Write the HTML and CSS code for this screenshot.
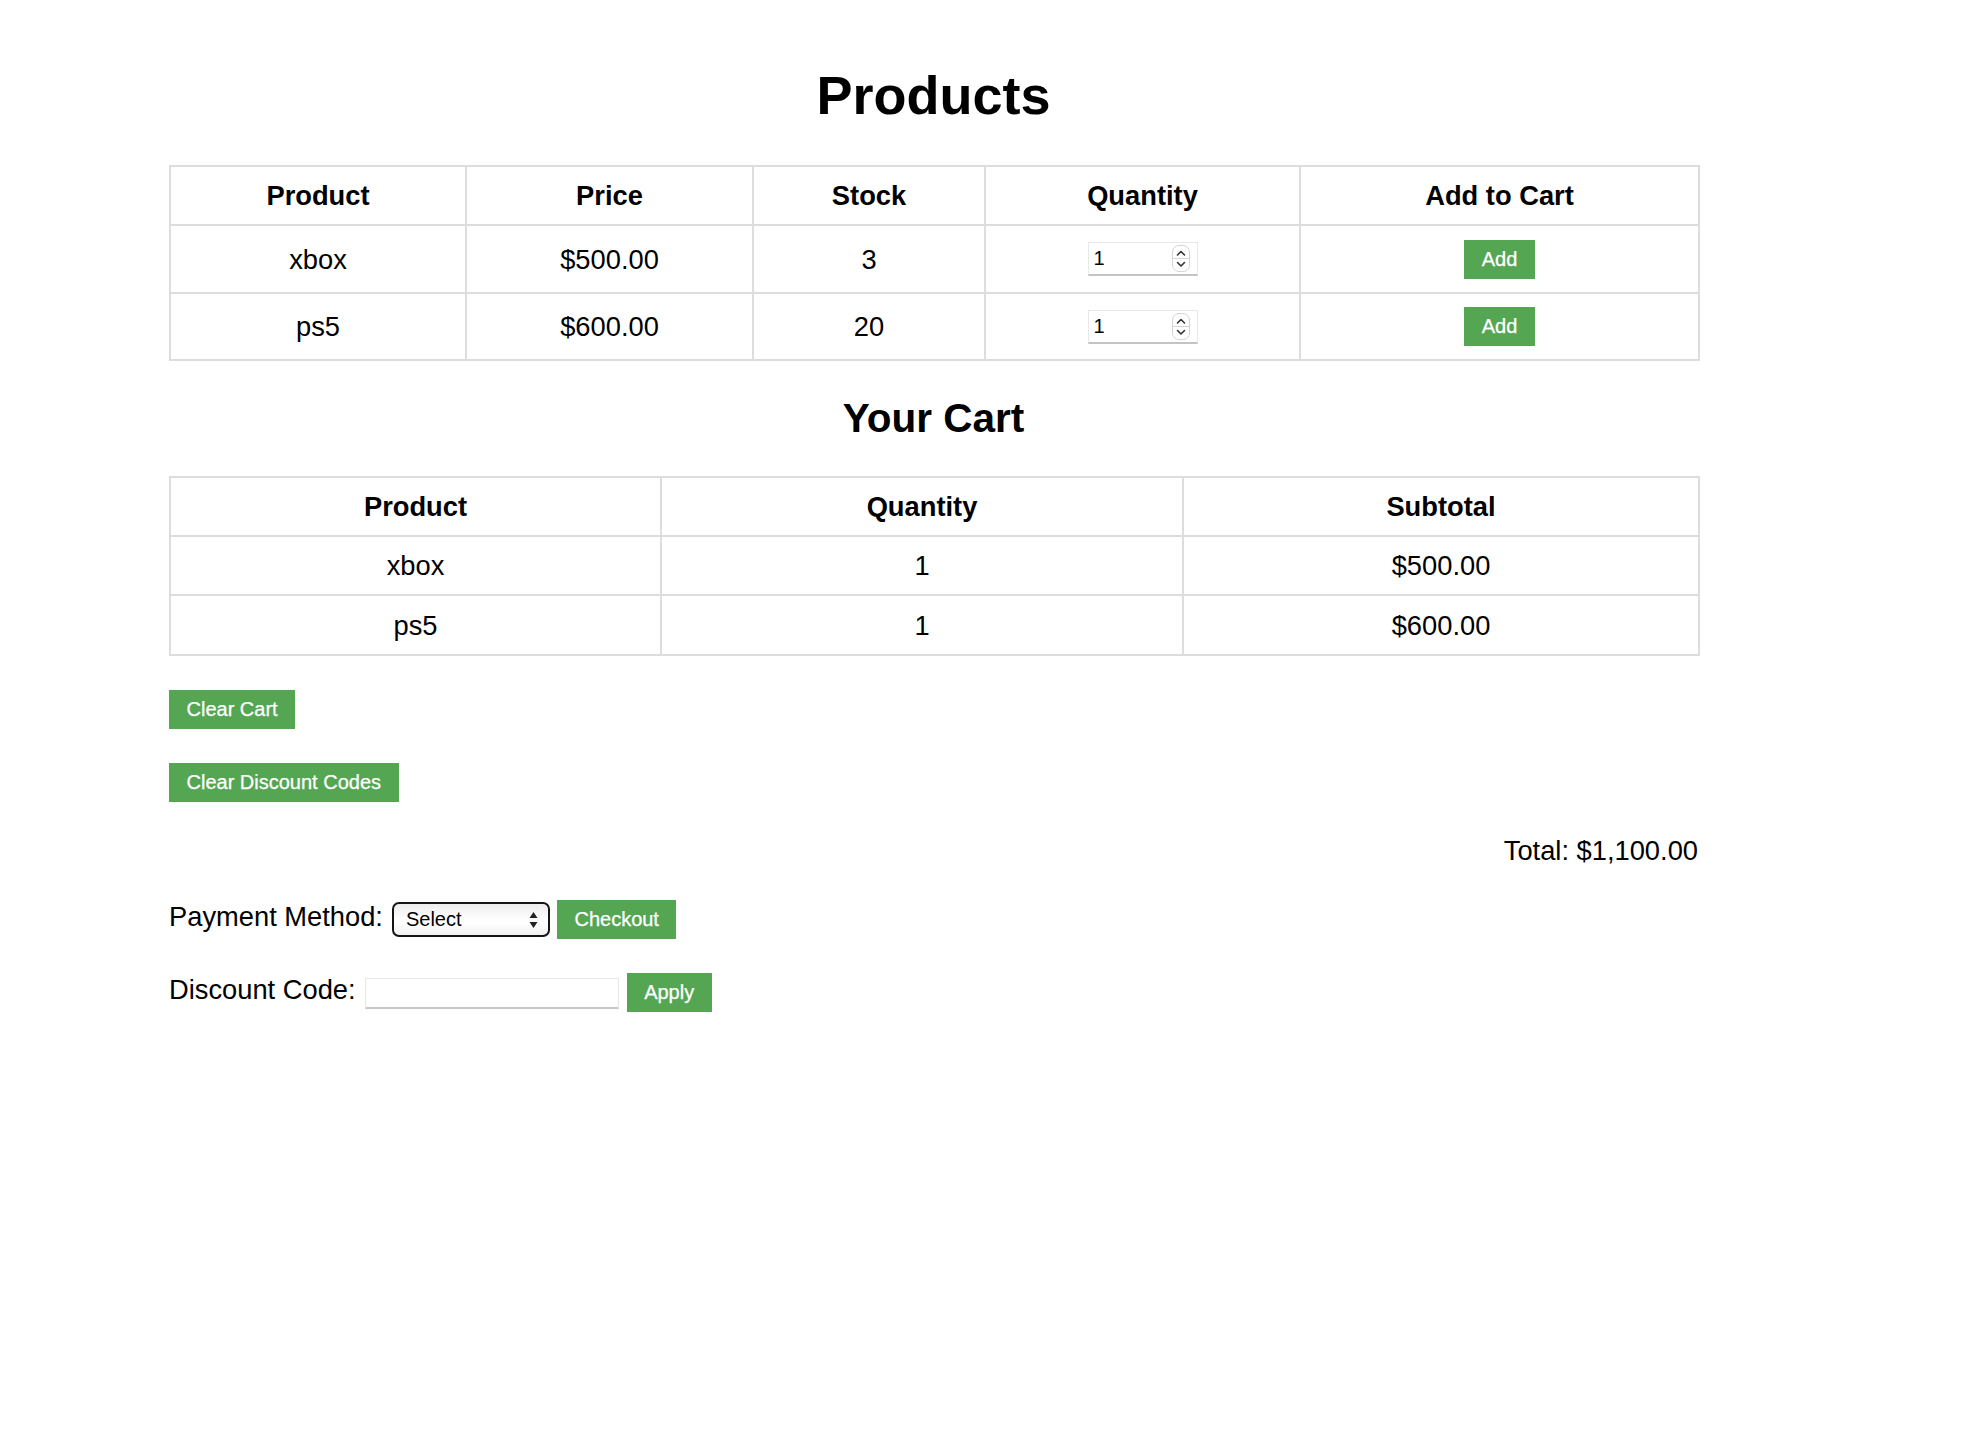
FILE: index.html
```html
<!DOCTYPE html>
<html lang="en">
<head>
<meta charset="utf-8">
<title>Products</title>
<link rel="stylesheet" href="styles.css">
</head>
<body>
<div class="page">
  <h1 class="title">Products</h1>
  <table class="grid products">
    <colgroup>
      <col class="pc1"><col class="pc2"><col class="pc3"><col class="pc4"><col class="pc5">
    </colgroup>
    <thead>
      <tr><th>Product</th><th>Price</th><th>Stock</th><th>Quantity</th><th>Add to Cart</th></tr>
    </thead>
    <tbody>
      <tr>
        <td>xbox</td><td>$500.00</td><td>3</td>
        <td><span class="qty"><input class="qty-input" type="number" value="1"><span class="spin"><svg width="18" height="27" viewBox="0 0 18 27"><path d="M5.5 10 L9 6.5 L12.5 10" fill="none" stroke="#333" stroke-width="1.6" stroke-linecap="round" stroke-linejoin="round"/><line x1="1" y1="13.5" x2="17" y2="13.5" stroke="#d6d6d6" stroke-width="1"/><path d="M5.5 17.5 L9 21 L12.5 17.5" fill="none" stroke="#333" stroke-width="1.6" stroke-linecap="round" stroke-linejoin="round"/></svg></span></span></td>
        <td><button class="btn">Add</button></td>
      </tr>
      <tr>
        <td>ps5</td><td>$600.00</td><td>20</td>
        <td><span class="qty"><input class="qty-input" type="number" value="1"><span class="spin"><svg width="18" height="27" viewBox="0 0 18 27"><path d="M5.5 10 L9 6.5 L12.5 10" fill="none" stroke="#333" stroke-width="1.6" stroke-linecap="round" stroke-linejoin="round"/><line x1="1" y1="13.5" x2="17" y2="13.5" stroke="#d6d6d6" stroke-width="1"/><path d="M5.5 17.5 L9 21 L12.5 17.5" fill="none" stroke="#333" stroke-width="1.6" stroke-linecap="round" stroke-linejoin="round"/></svg></span></span></td>
        <td><button class="btn">Add</button></td>
      </tr>
    </tbody>
  </table>

  <h2 class="subtitle">Your Cart</h2>
  <table class="grid cart">
    <colgroup><col class="cc1"><col class="cc2"><col class="cc3"></colgroup>
    <thead>
      <tr><th>Product</th><th>Quantity</th><th>Subtotal</th></tr>
    </thead>
    <tbody>
      <tr><td>xbox</td><td>1</td><td>$500.00</td></tr>
      <tr><td>ps5</td><td>1</td><td>$600.00</td></tr>
    </tbody>
  </table>

  <div class="block first"><button class="btn">Clear Cart</button></div>
  <div class="block second"><button class="btn">Clear Discount Codes</button></div>

  <div class="total">Total: $1,100.00</div>

  <div class="form-row pay-row">
    <label class="label">Payment Method:</label>
    <span class="select-wrap">
      <select class="select"><option>Select</option><option>Credit Card</option><option>PayPal</option></select>
      <svg class="select-arrows" width="9" height="18" viewBox="0 0 9 18"><path d="M4.5 1 L8.5 7 L0.5 7 Z" fill="#222"/><path d="M4.5 17 L8.5 11 L0.5 11 Z" fill="#222"/></svg>
    </span>
    <button class="btn">Checkout</button>
  </div>

  <div class="form-row code-row">
    <label class="label">Discount Code:</label>
    <input class="code-input" type="text">
    <button class="btn">Apply</button>
  </div>
</div>
</body>
</html>
```
FILE: styles.css
```css
html, body {
  margin: 0;
  padding: 0;
  background: #ffffff;
}

body {
  font-family: "Liberation Sans", Arial, Helvetica, sans-serif;
  color: #000;
}

.page {
  margin-left: 169px;
  width: 1529px;
}

.title {
  font-size: 54px;
  font-weight: bold;
  line-height: 61px;
  text-align: center;
  margin: 64.5px 0 39.5px;
}

.subtitle {
  font-size: 40.5px;
  font-weight: bold;
  line-height: 46px;
  text-align: center;
  margin: 33.5px 0 35px;
}

.grid {
  width: 1529px;
  border-collapse: collapse;
  table-layout: fixed;
  font-size: 27.3px;
  line-height: 31px;
}

.grid th,
.grid td {
  border: 2px solid #dddddd;
  padding: 13.2px;
  text-align: center;
  vertical-align: middle;
}

.grid th {
  font-weight: bold;
}

.pc1 { width: 296px; }
.pc2 { width: 287px; }
.pc3 { width: 232px; }
.pc4 { width: 315px; }
.pc5 { width: 399px; }

.cc1 { width: 491px; }
.cc2 { width: 522px; }
.cc3 { width: 516px; }

.btn {
  font-family: "Liberation Sans", Arial, Helvetica, sans-serif;
  font-size: 20px;
  line-height: 23px;
  height: 39px;
  padding: 8px 17.5px;
  border: none;
  border-radius: 0;
  background: #54a653;
  color: #ffffff;
  cursor: pointer;
  -webkit-text-stroke: 0.25px #ffffff;
}

.grid .btn {
  vertical-align: middle;
}

.qty {
  position: relative;
  display: inline-block;
  vertical-align: middle;
}

.qty-input {
  box-sizing: border-box;
  width: 110px;
  height: 34px;
  padding: 0 0 0 5px;
  font-family: "Liberation Sans", Arial, Helvetica, sans-serif;
  font-size: 20px;
  border: 1px solid #e8e8e8;
  border-bottom: 2px solid #c4c4c4;
  border-radius: 0;
  background: #fff;
  color: #000;
  -moz-appearance: textfield;
  appearance: textfield;
  display: block;
  outline: none;
}

.qty-input::-webkit-inner-spin-button,
.qty-input::-webkit-outer-spin-button {
  -webkit-appearance: none;
  margin: 0;
}

.spin {
  position: absolute;
  right: 8px;
  top: 3px;
  width: 18px;
  height: 27px;
  box-sizing: border-box;
  border: 1px solid #d4d4d4;
  border-radius: 7px;
  background: #fff;
  overflow: hidden;
}

.spin svg {
  display: block;
  margin: -1px 0 0 -1px;
}

.block.first {
  margin-top: 34.5px;
}

.block.second {
  margin-top: 34px;
}

.block .btn {
  display: block;
}

.total {
  margin-top: 33px;
  text-align: right;
  font-size: 27.3px;
  line-height: 31px;
}

.form-row {
  display: flex;
  align-items: baseline;
}

.pay-row {
  margin-top: 34px;
}

.code-row {
  margin-top: 34px;
}

.label {
  font-size: 27.3px;
  line-height: 31px;
  margin-right: 9px;
}

.select-wrap {
  position: relative;
  display: inline-block;
  margin-right: 7px;
}

.select {
  -webkit-appearance: none;
  appearance: none;
  box-sizing: border-box;
  width: 158px;
  height: 35px;
  padding: 0 0 0 12px;
  border: 2px solid #151515;
  border-radius: 7px;
  background: linear-gradient(to bottom, #ececec 0%, #fdfdfd 45%, #ffffff 60%, #f1f1f1 100%);
  font-family: "Liberation Sans", Arial, Helvetica, sans-serif;
  font-size: 20px;
  color: #000;
  outline: none;
}

.select-arrows {
  position: absolute;
  right: 12px;
  top: 9px;
  pointer-events: none;
}

.code-input {
  box-sizing: border-box;
  width: 254px;
  height: 31px;
  margin-right: 8px;
  padding: 0 6px;
  font-family: "Liberation Sans", Arial, Helvetica, sans-serif;
  font-size: 20px;
  border: 1px solid #e6e6e6;
  border-bottom: 2px solid #c8c8c8;
  border-radius: 0;
  background: #fff;
  outline: none;
}
```
